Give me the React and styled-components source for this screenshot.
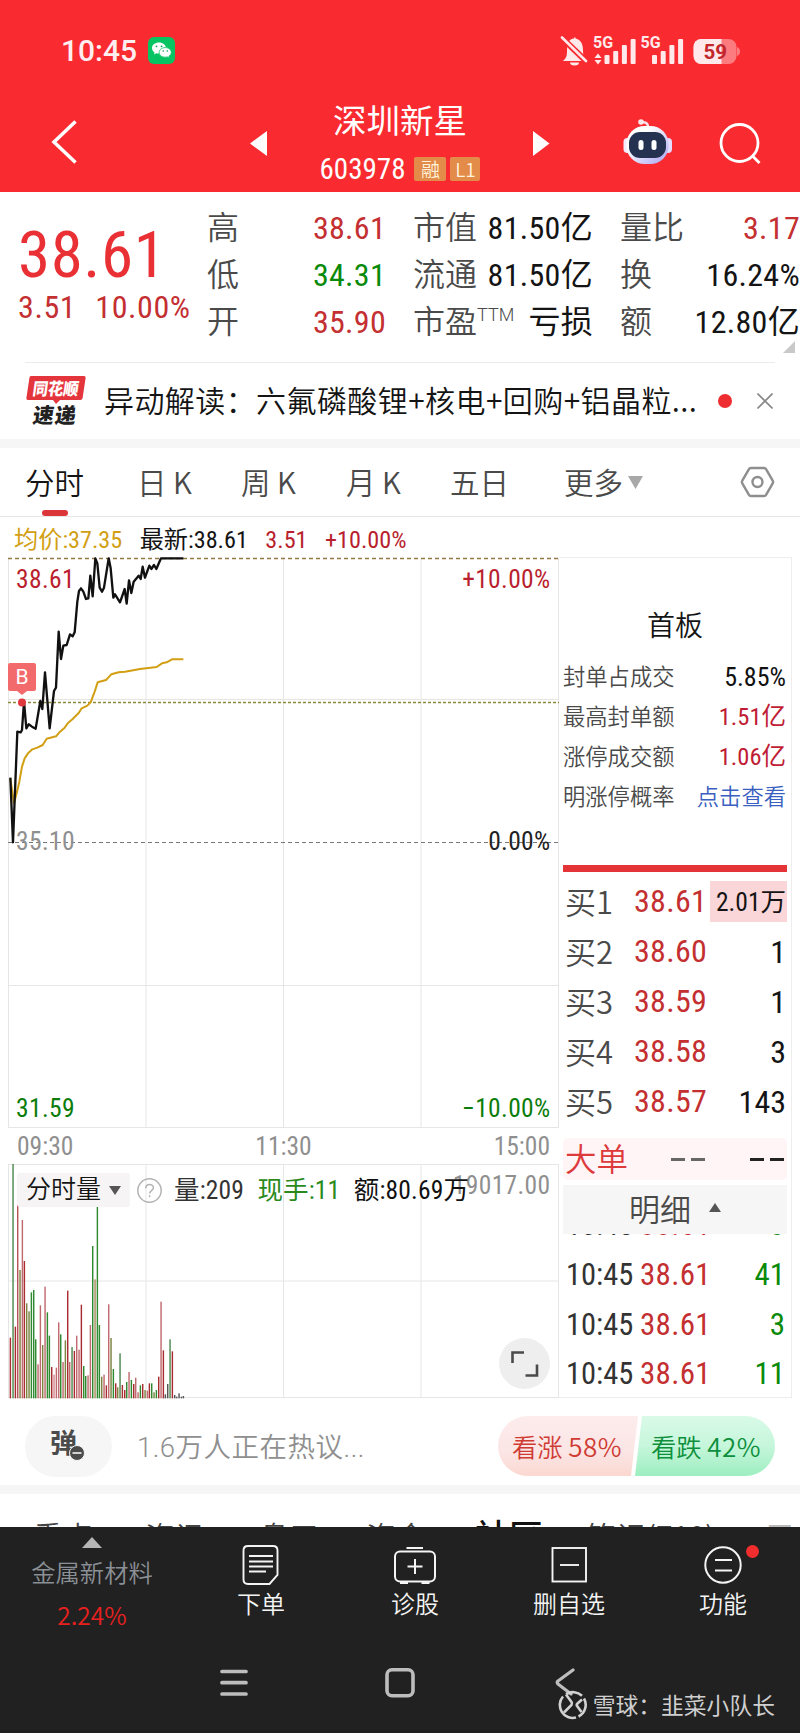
import React from 'react';
import styled, { createGlobalStyle } from 'styled-components';

const color = {
  brand: '#f92b31',
  up: '#c42f31',
  down: '#0a8a0a',
  text: '#141414',
  label: '#4a4a4a',
  muted: '#8f8f8f',
  line: '#e6e6e6',
  avg: '#d29f14',
};

const numFont = "'Roboto Condensed', 'Noto Sans CJK SC', sans-serif";
const textFont = "'Noto Sans CJK SC', sans-serif";

const quoteColumns = [
  [
    { label: '高', value: '38.61', tone: 'up' },
    { label: '低', value: '34.31', tone: 'down' },
    { label: '开', value: '35.90', tone: 'up' },
  ],
  [
    { label: '市值', value: '81.50亿' },
    { label: '流通', value: '81.50亿' },
    { label: '市盈', sup: 'TTM', value: '亏损' },
  ],
  [
    { label: '量比', value: '3.17', tone: 'up' },
    { label: '换', value: '16.24%' },
    { label: '额', value: '12.80亿' },
  ],
];

const periods = [
  { name: '分时', width: 61, gap: 51 },
  { name: '日 K', width: 54, gap: 50 },
  { name: '周 K', width: 54, gap: 51 },
  { name: '月 K', width: 54, gap: 50 },
  { name: '五日', width: 58, gap: 56 },
];

const boardFacts = [
  { label: '封单占成交', value: '5.85%', tone: 'text' },
  { label: '最高封单额', value: '1.51亿', tone: 'up' },
  { label: '涨停成交额', value: '1.06亿', tone: 'up' },
];

const bids = [
  { label: '买1', price: '38.61', qty: '2.01万', hot: true },
  { label: '买2', price: '38.60', qty: '1' },
  { label: '买3', price: '38.59', qty: '1' },
  { label: '买4', price: '38.58', qty: '3' },
  { label: '买5', price: '38.57', qty: '143' },
];

const trades = [
  { time: '10:45', price: '38.61', qty: '3' },
  { time: '10:45', price: '38.61', qty: '41' },
  { time: '10:45', price: '38.61', qty: '3' },
  { time: '10:45', price: '38.61', qty: '11' },
];

// chart units are a third of a pixel
const pricePoints =
  '31,1028 39,1222 52,890 62,892 66,885 72,800 79,880 86,868 96,875 107,881 121,798 127,822 135,712 149,880 162,768 168,758 176,590 183,672 190,632 200,630 210,598 218,604 224,592 232,500 237,468 243,460 250,470 258,492 265,490 271,422 278,484 286,370 292,385 299,458 306,470 312,458 326,370 332,400 340,488 345,478 360,502 374,462 380,506 387,436 394,474 401,440 416,422 422,432 428,395 435,428 448,392 454,402 462,390 469,402 483,370 550,370';
const avgPoints =
  '31,1030 42,1105 50,1075 58,1040 66,995 74,970 84,955 97,943 112,938 128,930 140,911 168,904 180,890 194,878 204,864 218,852 236,834 245,820 262,812 272,802 284,770 293,742 318,735 334,718 356,712 375,710 420,702 470,696 486,685 500,682 516,673 550,673';

const red = '#a82c30';
const pink = '#c06a70';
const green = '#2f8a2f';
const olive = '#7c8440';
const grey = '#555';

// [x, top, colour]
const volumes = [
  [31, 773, red], [39, 252, '#4c8a50'], [46, 740, red], [53, 297, '#b5555a'], [60, 570, olive],
  [67, 420, pink], [73, 543, red], [80, 670, olive], [87, 694, olive], [94, 637, green],
  [101, 630, green], [107, 778, green], [114, 853, pink], [121, 676, pink], [128, 795, olive],
  [135, 620, pink], [142, 697, green], [148, 767, green], [155, 861, red], [162, 884, '#d88a90'],
  [169, 863, pink], [176, 727, pink], [182, 763, green], [189, 846, pink], [196, 781, olive],
  [203, 632, red], [209, 846, pink], [216, 801, '#4c8a50'], [223, 813, red], [230, 767, pink],
  [237, 809, pink], [244, 674, red], [251, 858, green], [257, 888, green], [264, 886, pink],
  [271, 735, pink], [278, 498, green], [285, 598, '#a98a5c'], [292, 372, green], [298, 735, green],
  [305, 890, olive], [312, 884, pink], [319, 916, red], [326, 673, pink], [333, 774, olive],
  [340, 867, green], [347, 910, red], [353, 922, olive], [360, 820, '#4c8a50'], [367, 915, red],
  [374, 930, red], [380, 906, green], [387, 876, pink], [394, 900, green], [401, 912, red],
  [407, 893, pink], [414, 937, pink], [421, 916, green], [428, 912, red], [435, 930, olive],
  [442, 932, pink], [448, 910, red], [455, 910, green], [462, 937, olive], [469, 930, green],
  [476, 890, red], [483, 665, pink], [490, 811, red], [496, 943, grey], [503, 912, grey],
  [510, 778, '#4c8a50'], [517, 814, red], [524, 945, grey], [530, 950, grey], [537, 940, grey],
  [544, 950, grey], [550, 948, grey],
];

const GlobalStyle = createGlobalStyle`
  body {
    margin: 0;
    background: #fff;
  }
  * {
    box-sizing: border-box;
  }
`;

const Phone = styled.div`
  width: 800px;
  height: 1733px;
  display: flex;
  flex-direction: column;
  overflow: hidden;
  background: #fff;
  color: ${color.text};
  font-family: ${textFont};
  font-weight: 350;
  white-space: nowrap;
`;

/* header */

const Header = styled.header`
  height: 192px;
  background: ${color.brand};
  color: #fff;
`;

const StatusBar = styled.div`
  height: 101px;
  padding: 0 60px 0 61px;
  display: flex;
  align-items: center;
  svg {
    flex: none;
  }
`;

const Clock = styled.span`
  width: 87px;
  font: 500 30px/40px Roboto, sans-serif;
  color: #ffeef0;
`;

const StatusIcons = styled.svg`
  margin-left: auto;
`;

const TitleBar = styled.div`
  height: 91px;
  padding-left: 51px;
  display: flex;
  align-items: flex-start;
`;

const TitleIcon = styled.svg`
  flex: none;
  margin: ${(p) => p.$top}px 0 0 ${(p) => p.$left}px;
`;

const Title = styled.div`
  width: 220px;
  margin-left: 23px;
  display: flex;
  flex-direction: column;
  align-items: center;
`;

const StockName = styled.h1`
  margin: -1px 0 0;
  font-size: 33.5px;
  line-height: 38px;
  font-weight: 400;
`;

const CodeRow = styled.div`
  margin-top: 16px;
  display: flex;
  align-items: center;
  font: 400 29px/30px ${numFont};
`;

const Tag = styled.span`
  width: ${(p) => p.$width}px;
  height: 24px;
  margin-left: ${(p) => p.$gap}px;
  border-radius: 2px;
  background: #e38b48;
  color: #fff3dd;
  font: 350 19px/23px ${textFont};
  text-align: center;
`;

/* quote */

const Quote = styled.section`
  position: relative;
  height: 170px;
  padding-top: 13px;
  display: flex;
  font-family: ${numFont};
`;

const PriceBlock = styled.div`
  width: 207px;
  padding: 22px 0 0 18px;
`;

const Price = styled.div`
  font-size: 65px;
  font-weight: 400;
  letter-spacing: 0.6px;
  line-height: 56px;
  color: #e93035;
`;

const Change = styled.div`
  margin-top: 7px;
  display: flex;
  gap: 19px;
  font-size: 32px;
  font-weight: 400;
  letter-spacing: 0.6px;
  line-height: 34px;
  color: ${color.up};
`;

const QuoteColumn = styled.div`
  width: ${(p) => p.$width}px;
  margin-right: ${(p) => p.$gap}px;
`;

const QuoteCell = styled.div`
  height: 47px;
  display: flex;
  justify-content: space-between;
  font-size: 32px;
  line-height: 47px;
`;

const QuoteLabel = styled.span`
  display: flex;
  color: ${color.label};
`;

const Sup = styled.small`
  font: 300 18px/32px Roboto, sans-serif;
`;

const QuoteValue = styled.span`
  font-weight: 400;
  letter-spacing: 0.3px;
  color: ${(p) => color[p.$tone || 'text']};
`;

const Corner = styled.i`
  position: absolute;
  right: 5px;
  bottom: 9px;
  border: 6px solid;
  border-color: transparent #c9c9c9 #c9c9c9 transparent;
`;

const News = styled.section`
  height: 77px;
  margin: 0 25px;
  border-top: 1px solid #ececec;
  display: flex;
  align-items: center;
`;

const NewsLogo = styled.svg`
  flex: none;
  width: 64px;
  height: 56px;
  text {
    font-family: ${textFont};
    font-weight: 900;
  }
`;

const NewsText = styled.p`
  width: 614px;
  margin: -5px 0 0 15px;
  font: 350 30px/40px ${textFont};
  letter-spacing: 0.42px;
`;

const RedDot = styled.i`
  width: 14px;
  height: 14px;
  border-radius: 50%;
  background: #ee2d30;
`;

const CloseIcon = styled.svg`
  margin: 0 2px 0 auto;
`;

const Band = styled.div`
  height: 9px;
  background: #f6f6f6;
`;

/* period tabs */

const Tabs = styled.nav`
  height: 69px;
  padding-left: 25px;
  border-bottom: 1px solid ${color.line};
  display: flex;
`;

const Tab = styled.div`
  position: relative;
  width: ${(p) => p.$width}px;
  margin-right: ${(p) => p.$gap}px;
  font-size: 29.5px;
  line-height: 67px;
  color: ${(p) => (p.$active ? color.text : color.label)};
  ${(p) =>
    p.$active &&
    `&::after {
      content: '';
      position: absolute;
      left: 17px;
      bottom: 0;
      width: 26px;
      height: 6px;
      border-radius: 3px;
      background: #dc3539;
    }`}
`;

const TabArrow = styled.svg`
  margin: 28px 97px 0 4px;
`;

const SettingsIcon = styled.svg`
  margin-top: 18px;
`;

/* chart area */

const Main = styled.main`
  height: 881px;
  padding-left: 8px;
  display: flex;
`;

const ChartColumn = styled.div`
  width: 551px;
`;

const Legend = styled.div`
  height: 41px;
  padding-left: 6px;
  display: flex;
  gap: 17.500px;
  font: 400 24.2px/46px ${numFont};
`;

const LegendItem = styled.span`
  color: ${(p) => p.$color};
`;

const PriceChart = styled.div`
  position: relative;
  height: 570px;
`;

const Plot = styled.svg`
  position: absolute;
  inset: 0;
  overflow: visible;
`;

const ChartLabel = styled.span`
  position: absolute;
  ${(p) => p.$side}: ${(p) => (p.$side === 'left' ? 8 : 8.5)}px;
  top: ${(p) => p.$top}px;
  font: 400 25.500px/28px ${numFont};
  letter-spacing: 0.35px;
  color: ${(p) => p.$color};
`;

const BuyMark = styled.span`
  position: absolute;
  left: 0;
  top: 105px;
  width: 28px;
  height: 28px;
  border-radius: 2px;
  background: #f26a6c;
  color: #fff;
  font: 400 21px/29px Roboto, sans-serif;
  text-align: center;
  &::after {
    content: '';
    position: absolute;
    left: 9px;
    top: 28px;
    border: 5px solid transparent;
    border-top: 4px solid #f26a6c;
  }
`;

const TimeAxis = styled.div`
  height: 36px;
  padding: 0 9px;
  display: flex;
  justify-content: space-between;
  font: 400 25.500px/37px ${numFont};
  color: ${color.muted};
`;

const VolumeChart = styled.div`
  position: relative;
  height: 234px;
`;

const VolumeHead = styled.div`
  position: absolute;
  left: 9px;
  top: 9px;
  display: flex;
  align-items: center;
  font: 400 25.500px/34px ${numFont};
`;

const VolumePicker = styled.div`
  width: 113px;
  height: 34px;
  padding-left: 9px;
  border-radius: 3px;
  background: #f6f4f5;
  font-weight: 350;
  font-size: 25px;
  display: flex;
  align-items: center;
  gap: 8px;
`;

const HelpIcon = styled.svg`
  margin: 0 12px 0 7px;
`;

const VolumeValue = styled.span`
  margin-right: 13.500px;
  letter-spacing: 0.15px;
  color: ${(p) => p.$color};
`;

const ExpandButton = styled.span`
  position: absolute;
  right: 9px;
  bottom: 9px;
  width: 51px;
  height: 51px;
  border-radius: 50%;
  background: #eee;
`;

/* order book */

const SidePanel = styled.aside`
  width: 233px;
  height: 841px;
  margin-top: 40px;
  padding: 0 4px;
  border: 1px solid #ededed;
  border-left: none;
  overflow: hidden;
`;

const BoardTitle = styled.h2`
  margin: 46px 0 0;
  font-size: 28px;
  line-height: 40px;
  font-weight: 350;
  text-align: center;
`;

const Facts = styled.div`
  height: 181px;
  margin-top: 13px;
`;

const Fact = styled.div`
  height: 40px;
  padding: 0 1px 0 0;
  display: flex;
  justify-content: space-between;
  font: 350 22.3px/40px ${numFont};
  color: ${color.label};
`;

const FactValue = styled.span`
  font-size: ${(p) => (p.$tone === 'text' ? 26 : p.$tone === 'up' ? 24.5 : 22.3)}px;
  font-weight: ${(p) => (p.$tone === 'link' ? 350 : 400)};
  color: ${(p) => ({ up: '#c01c34', text: '#111', link: '#3a5fc0' })[p.$tone]};
`;

const BidBar = styled.div`
  height: 7px;
  margin: 27px 0 4px;
  background: #e53438;
`;

const BookRow = styled.div`
  height: 50px;
  padding-left: 2px;
  display: flex;
  align-items: center;
  font: 400 32px/50px ${numFont};
`;

const BookLabel = styled.span`
  width: 69px;
  font: 350 31px/50px ${textFont};
  line-height: 46px;
  color: ${color.label};
`;

const BookPrice = styled.span`
  width: 76px;
  letter-spacing: 0.3px;
  color: ${color.up};
`;

const BookQty = styled.span`
  flex: 1;
  height: 41px;
  padding-right: 1px;
  line-height: 42px;
  text-align: right;
  font-size: ${(p) => (p.$hot ? 25.5 : 32)}px;
  background: ${(p) => (p.$hot ? '#fad6d8' : 'none')};
`;

const BigOrder = styled.div`
  height: 42px;
  margin-top: 12px;
  padding: 0 2px;
  border-radius: 5px;
  background: #fff4f6;
  display: flex;
  align-items: center;
  font: 350 31.500px/38px ${textFont};
  color: #dd3a3c;
`;

const BigOrderLabel = styled.span`
  height: 42px;
`;

const Dashes = styled.span`
  display: flex;
  gap: 6px;
  margin-left: ${(p) => p.$gap}px;
  &::before,
  &::after {
    content: '';
    width: 14px;
    height: 3px;
    background: ${(p) => p.$color};
  }
`;

const DetailHead = styled.div`
  height: 49px;
  margin-top: 5px;
  padding-bottom: 4px;
  background: #f6f6f6;
  display: flex;
  align-items: center;
  justify-content: center;
  gap: 18px;
  font-size: 31px;
  line-height: 45px;
  color: ${color.label};
`;

const TradeList = styled.div`
  height: 163px;
  overflow: hidden;
  display: flex;
  flex-direction: column;
  justify-content: flex-end;
`;

const Trade = styled.div`
  flex: none;
  height: 49.6px;
  padding: 4px 2px 0 3px;
  display: flex;
  align-items: center;
  font: 400 31px/44px ${numFont};
`;

const TradeTime = styled.span`
  width: 74px;
  font-size: 30.5px;
  color: #333;
`;

const TradeQty = styled.span`
  margin-left: auto;
  color: ${color.down};
`;

/* discussion */

const Talk = styled.section`
  height: 87px;
  padding: 0 25px;
  display: flex;
  align-items: center;
`;

const DanmuButton = styled.div`
  position: relative;
  top: 5px;
  width: 87px;
  height: 61px;
  border-radius: 31px;
  background: #f6f6f6;
  padding-left: 25px;
  font: 700 27px/52px ${textFont};
  color: #4b4b4b;
  svg {
    position: absolute;
    left: 44px;
    top: 29px;
  }
`;

const TalkHint = styled.p`
  margin: 12px 0 0 25px;
  font: 350 27.500px/40px Roboto, ${textFont};
  letter-spacing: 0.5px;
  color: ${color.muted};
`;

const Vote = styled.div`
  height: 60px;
  margin: 9px 0 0 auto;
  border-radius: 30px;
  overflow: hidden;
  display: flex;
`;

const VoteSide = styled.div`
  width: 140px;
  padding-left: ${(p) => (p.$up ? 14 : 16)}px;
  margin-left: ${(p) => (p.$up ? 0 : -3)}px;
  clip-path: ${(p) =>
    p.$up ? 'polygon(0 0, 100% 0, 133px 100%, 0 100%)' : 'polygon(7px 0, 100% 0, 100% 100%, 0 100%)'};
  background: ${(p) =>
    p.$up ? 'linear-gradient(#fdecec, #fbe5e5 60%, #fbd8d0)' : 'linear-gradient(#d9fae8, #c6f6db 50%, #9deec0)'};
  font: 350 25.3px/59px ${textFont};
  color: ${(p) => (p.$up ? '#cf3b33' : '#0d8f3c')};
`;

const VoteShare = styled.span`
  font-size: 26px;
  letter-spacing: 0.5px;
`;

const Feed = styled.div`
  height: 33px;
  overflow: hidden;
  padding: 21px 0 0 33px;
  display: flex;
`;

const FeedTab = styled.span`
  flex: none;
  width: ${(p) => p.$width}px;
  font-size: ${(p) => (p.$active ? 34 : 30)}px;
  font-weight: ${(p) => (p.$active ? 500 : 350)};
  line-height: 40px;
  color: ${(p) => (p.$faded ? '#bbb' : p.$active ? '#111' : '#444')};
`;

/* bottom bars */

const Dock = styled.footer`
  height: 206px;
  background: #212121;
  color: #f4f4f4;
`;

const Actions = styled.div`
  height: 118px;
  display: grid;
  grid-template-columns: 184px repeat(4, 154px);
`;

const Sector = styled.div`
  display: flex;
  flex-direction: column;
  align-items: center;
  font-size: 24.3px;
  line-height: 30px;
  color: #8b9096;
`;

const SectorChange = styled.span`
  margin-top: 13px;
  font-size: 24.500px;
  color: #e8201f;
`;

const SectorArrow = styled.svg`
  margin: 10px 0 9px;
`;

const Action = styled.div`
  position: relative;
  display: flex;
  flex-direction: column;
  align-items: center;
  font-size: 24px;
  line-height: 30px;
  svg {
    margin: 17px 0 2px;
  }
`;

const Badge = styled.i`
  position: absolute;
  left: 100px;
  top: 18px;
  width: 13px;
  height: 13px;
  border-radius: 50%;
  background: #f22d2d;
`;

const SystemNav = styled.div`
  position: relative;
  height: 88px;
`;

const NavKeys = styled.div`
  padding: 22px 0 0 219px;
  display: flex;
  gap: 135px;
`;

const Watermark = styled.div`
  position: absolute;
  right: 25px;
  top: 42px;
  display: flex;
  align-items: center;
  gap: 5px;
  font: 400 22.800px/36px ${textFont};
  color: #cfcfcf;
`;

const WechatIcon = () => (
  <svg width="27" height="27" viewBox="0 0 27 27">
    <rect width="27" height="27" rx="6" fill="#07c463" />
    <path d="M11 5.500c-4 0-7 2.400-7 5.600 0 1.800 1 3.300 2.500 4.300l-.5 2 2.300-1.200c.8.3 1.700.4 2.700.4 4 0 7-2.400 7-5.500s-3-5.600-7-5.600z" fill="#fff" />
    <path d="M17.200 10.600c-3.400 0-6 2.100-6 4.800s2.600 4.800 6 4.800c.8 0 1.500-.1 2.200-.3l2 1-.5-1.700c1.500-.9 2.400-2.300 2.400-3.800 0-2.700-2.700-4.800-6.100-4.800z" fill="#fff" stroke="#07c463" strokeWidth=".8" />
    <g fill="#07a050">
      <circle cx="8.500" cy="9.300" r=".9" />
      <circle cx="13.500" cy="9.300" r=".9" />
      <circle cx="15.200" cy="14" r=".8" />
      <circle cx="19.300" cy="14" r=".8" />
    </g>
  </svg>
);

const Bars = ({ x }) => (
  <g>
    <rect x={x} y="19" width="5" height="9" rx="1" />
    <rect x={x + 8.7} y="15" width="5" height="13" rx="1" />
    <rect x={x + 17.4} y="9" width="5" height="19" rx="1" />
    <rect x={x + 26.1} y="3" width="5" height="25" rx="1" />
  </g>
);

const SignalIcons = () => (
  <StatusIcons width="180" height="30" viewBox="0 0 180 30" fill="#ffe9eb">
    <path d="M3 25c3-3 4-5 4-9C7 7 9 3 14 2.500V1.500h1.500v1C20 3.500 23 7 23 14c0 6 1 8 4 11z" />
    <path d="M10 26.500h9a4.500 3 0 0 1-9 0z" />
    <path d="M1 1l26 25" stroke={color.brand} strokeWidth="6" />
    <path d="M2 1.500l24 23.500" stroke="#ffe9eb" strokeWidth="2.600" strokeLinecap="round" />
    <text x="33" y="12" fontFamily="Roboto, sans-serif" fontWeight="700" fontSize="16">5G</text>
    <path d="M38 17.500l3.500 4.500h-7zM38 28.500l3.500-4.500h-7z" />
    <Bars x={44.5} />
    <text x="80.500" y="12" fontFamily="Roboto, sans-serif" fontWeight="700" fontSize="16">5G</text>
    <Bars x={92} />
    <rect x="133.500" y="3" width="43" height="25" rx="8" opacity=".42" />
    <path d="M141 3h20.500v25H141a7.500 8 0 0 1-7.500-8v-9a7.500 8 0 0 1 7.500-8z" />
    <path d="M177 11q3 1 3 4.500t-3 4.500z" opacity=".42" />
    <text x="143.500" y="22.500" fontFamily="Roboto, sans-serif" fontWeight="700" fontSize="20.500" fill="#c2272c">59</text>
  </StatusIcons>
);

const RobotIcon = () => (
  <TitleIcon width="50" height="48" viewBox="0 0 50 48" $left={73} $top={17}>
    <defs>
      <linearGradient id="shell" x1="0" y1="0" x2="1" y2="1">
        <stop offset=".3" stopColor="#fff" />
        <stop offset="1" stopColor="#a6a2f2" />
      </linearGradient>
    </defs>
    <path d="M25 9q0-5-6-5" fill="none" stroke="#f6dfe6" strokeWidth="2.500" />
    <circle cx="18" cy="4" r="2.800" fill="#fbe6ea" />
    <rect x=".5" y="20" width="8" height="15" rx="4" fill="#f3eaff" />
    <rect x="41" y="20" width="8" height="15" rx="4" fill="#e3dcff" />
    <rect x="3.500" y="8" width="42" height="38" rx="18" fill="url(#shell)" />
    <rect x="6" y="14" width="37" height="26" rx="11" fill="#253150" />
    <rect x="15.500" y="22" width="5" height="10" rx="2.500" fill="#fff" />
    <rect x="28.500" y="22" width="5" height="10" rx="2.500" fill="#fff" />
  </TitleIcon>
);

const HeaderBlock = () => (
  <Header>
    <StatusBar>
      <Clock>10:45</Clock>
      <WechatIcon />
      <SignalIcons />
    </StatusBar>
    <TitleBar>
      <TitleIcon width="27" height="44" viewBox="0 0 27 44" $left={0} $top={19} fill="none" stroke="#fff" strokeWidth="3.500">
        <path d="M24.500 1.500L3 22l21.500 20.500" />
      </TitleIcon>
      <TitleIcon width="17" height="25" viewBox="0 0 17 25" $left={172} $top={30} fill="#fff">
        <path d="M17 0v25L0 12.500z" />
      </TitleIcon>
      <Title>
        <StockName>深圳新星</StockName>
        <CodeRow>
          603978
          <Tag $width={32} $gap={9}>融</Tag>
          <Tag $width={30} $gap={4}>L1</Tag>
        </CodeRow>
      </Title>
      <TitleIcon width="17" height="25" viewBox="0 0 17 25" $left={23} $top={30} fill="#fff">
        <path d="M0 0v25l16.500-12.500z" />
      </TitleIcon>
      <RobotIcon />
      <TitleIcon width="42" height="43" viewBox="0 0 42 43" $left={46} $top={21} fill="none" stroke="#fff" strokeWidth="2.800">
        <circle cx="20.500" cy="21" r="18.500" />
        <path d="M33 33.500l7.500 7.500" />
      </TitleIcon>
    </TitleBar>
  </Header>
);

const QuoteBlock = () => (
  <Quote>
    <PriceBlock>
      <Price>38.61</Price>
      <Change>
        <span>3.51</span>
        <span>10.00%</span>
      </Change>
    </PriceBlock>
    {quoteColumns.map((cells, i) => (
      <QuoteColumn key={i} $width={i === 0 ? 179 : 180} $gap={i === 2 ? 0 : 27}>
        {cells.map((cell) => (
          <QuoteCell key={cell.label}>
            <QuoteLabel>
              {cell.label}
              {cell.sup && <Sup>{cell.sup}</Sup>}
            </QuoteLabel>
            <QuoteValue $tone={cell.tone}>{cell.value}</QuoteValue>
          </QuoteCell>
        ))}
      </QuoteColumn>
    ))}
    <Corner />
  </Quote>
);

const NewsBlock = () => (
  <News>
    <NewsLogo viewBox="0 0 64 56">
      <path d="M6 3h53q2 0 1.600 2l-3 20q-.3 2-2.300 2H35l-4 4-3-4H3q-2 0-1.600-2l3-20Q4.600 3 6 3z" fill="#e5353c" />
      <text x="10" y="22" fontSize="17" fill="#fff" transform="skewX(-8)" textLength="46" lengthAdjust="spacingAndGlyphs">同花顺</text>
      <text x="14" y="50" fontSize="21" fill="#222" transform="skewX(-8)" textLength="43">速递</text>
    </NewsLogo>
    <NewsText>异动解读：六氟磷酸锂+核电+回购+铝晶粒...</NewsText>
    <RedDot />
    <CloseIcon width="16" height="16" viewBox="0 0 16 16" stroke="#888" strokeWidth="1.600">
      <path d="M.5.5l15 15M15.500.5l-15 15" />
    </CloseIcon>
  </News>
);

const PriceSection = () => (
  <PriceChart>
    <Plot width="551" height="570" fill="none">
      <path d="M.5 0V569.500M138 0V569.500M275.500 0V569.500M413 0V569.500M550.500 0V569.500M0 141.500H551M0 427.500H551M0 569.500H551" stroke={color.line} />
      <path d="M0 .5H551" stroke="#937a45" strokeWidth="1.300" strokeDasharray="4 3" />
      <path d="M0 144.500H551" stroke="#8a8a3c" strokeWidth="1.300" strokeDasharray="3 2" />
      <path d="M0 284.500H551" stroke="#777" strokeWidth="1.200" strokeDasharray="4 3" />
      <g transform="translate(-8 -123) scale(.33333)" strokeLinejoin="round">
        <polyline points={avgPoints} stroke={color.avg} strokeWidth="6" />
        <polyline points={pricePoints} stroke="#111" strokeWidth="7" />
      </g>
      <circle cx="14" cy="144.500" r="4" fill="#e0383f" />
    </Plot>
    <ChartLabel $side="left" $top={7} $color="#b91f2e">38.61</ChartLabel>
    <ChartLabel $side="right" $top={7} $color="#b91f2e">+10.00%</ChartLabel>
    <ChartLabel $side="left" $top={269} $color={color.muted}>35.10</ChartLabel>
    <ChartLabel $side="right" $top={269} $color="#222">0.00%</ChartLabel>
    <ChartLabel $side="left" $top={536} $color="#0b7d0b">31.59</ChartLabel>
    <ChartLabel $side="right" $top={536} $color="#0b7d0b">−10.00%</ChartLabel>
    <BuyMark>B</BuyMark>
  </PriceChart>
);

const VolumeSection = () => (
  <VolumeChart>
    <Plot width="551" height="234" fill="none">
      <path d="M.5 0V234M138 0V234M275.500 0V234M413 0V234M550.500 0V234M0 .5H551M0 117H551M0 233.500H551" stroke={color.line} />
      <g transform="translate(-8 -84) scale(.33333)">
        {volumes.map(([x, top, fill]) => (
          <rect key={x} x={x - 2} y={top} width="4.300" height={955 - top} fill={fill} />
        ))}
      </g>
    </Plot>
    <ChartLabel $side="right" $top={7} $color={color.muted}>19017.00</ChartLabel>
    <VolumeHead>
      <VolumePicker>
        分时量
        <svg width="12" height="9" viewBox="0 0 12 9" fill="#555">
          <path d="M0 0h12L6 9z" />
        </svg>
      </VolumePicker>
      <HelpIcon width="25" height="25" viewBox="0 0 25 25" fill="none" stroke="#b3b3b3" strokeWidth="1.500">
        <circle cx="12.500" cy="12.500" r="11.700" />
        <path d="M8.800 10.200c0-5 7.600-4.900 7.600-.4 0 2.600-3.800 3-3.800 5.700M12.600 17.300v2" />
      </HelpIcon>
      <VolumeValue $color="#333">量:209</VolumeValue>
      <VolumeValue $color="#2a8a1c">现手:11</VolumeValue>
      <VolumeValue $color="#111">额:80.69万</VolumeValue>
    </VolumeHead>
    <ExpandButton>
      <svg width="51" height="51" viewBox="0 0 51 51" fill="none" stroke="#4a4a4a" strokeWidth="2.600">
        <path d="M13.500 25V14.500H25M38 26.500V37.500H26.500" />
      </svg>
    </ExpandButton>
  </VolumeChart>
);

const OrderBook = () => (
  <SidePanel>
    <BoardTitle>首板</BoardTitle>
    <Facts>
      {boardFacts.map((fact) => (
        <Fact key={fact.label}>
          {fact.label}
          <FactValue $tone={fact.tone}>{fact.value}</FactValue>
        </Fact>
      ))}
      <Fact>
        明涨停概率
        <FactValue $tone="link">点击查看</FactValue>
      </Fact>
    </Facts>
    <BidBar />
    {bids.map((bid) => (
      <BookRow key={bid.label}>
        <BookLabel>{bid.label}</BookLabel>
        <BookPrice>{bid.price}</BookPrice>
        <BookQty $hot={bid.hot}>{bid.qty}</BookQty>
      </BookRow>
    ))}
    <BigOrder>
      <BigOrderLabel>大单</BigOrderLabel>
      <Dashes $gap={43} $color="#666" />
      <Dashes $gap={45} $color="#222" />
    </BigOrder>
    <DetailHead>
      明细
      <svg width="12" height="9" viewBox="0 0 12 9" fill="#555">
        <path d="M0 9h12L6 0z" />
      </svg>
    </DetailHead>
    <TradeList>
      {trades.map((trade, i) => (
        <Trade key={i}>
          <TradeTime>{trade.time}</TradeTime>
          <BookPrice>{trade.price}</BookPrice>
          <TradeQty>{trade.qty}</TradeQty>
        </Trade>
      ))}
    </TradeList>
  </SidePanel>
);

const BottomDock = () => (
  <Dock>
    <Actions>
      <Sector>
        <SectorArrow width="20" height="11" viewBox="0 0 20 11" fill="#b5b5b5">
          <path d="M10 0l10 11H0z" />
        </SectorArrow>
        金属新材料
        <SectorChange>2.24%</SectorChange>
      </Sector>
      <Action>
        <svg width="38" height="42" viewBox="0 0 38 42" fill="none" stroke="#f4f4f4" strokeWidth="1.900">
          <path d="M6 2h25q4.500 0 4.500 4.500V31l-8 9H6q-4.500 0-4.500-4.500v-29Q1.500 2 6 2z" />
          <path d="M7 12h24M7 17.500h24M7 22.500h24M7 27.500h17" />
        </svg>
        下单
      </Action>
      <Action>
        <svg width="44" height="42" viewBox="0 0 44 42" fill="none" stroke="#f4f4f4" strokeWidth="2">
          <rect x="2" y="7.500" width="40" height="30" rx="5" />
          <path d="M13.500 4h16.500M22 15v15M14.500 22.500h15M7 39h8M28.500 39h8" />
        </svg>
        诊股
      </Action>
      <Action>
        <svg width="38" height="42" viewBox="0 0 38 42" fill="none" stroke="#f4f4f4" strokeWidth="1.900">
          <rect x="2.500" y="4" width="33.500" height="33.500" />
          <path d="M10 21h19" />
        </svg>
        删自选
      </Action>
      <Action>
        <svg width="40" height="42" viewBox="0 0 40 42" fill="none" stroke="#f4f4f4" strokeWidth="2">
          <circle cx="20" cy="21" r="17.700" />
          <path d="M12 16h17M12 26.500h17" />
        </svg>
        功能
        <Badge />
      </Action>
    </Actions>
    <SystemNav>
      <NavKeys>
        <svg width="30" height="34" viewBox="0 0 30 34" stroke="#bdbdbd" strokeWidth="3.700" strokeLinecap="round">
          <path d="M3 4.500h24M3 15.700h24M3 27h24" />
        </svg>
        <svg width="32" height="34" viewBox="0 0 32 34" fill="none" stroke="#bdbdbd" strokeWidth="3.600">
          <rect x="3" y="2.800" width="26" height="26" rx="5" />
        </svg>
        <svg width="24" height="34" viewBox="-2 0 24 34" fill="none" stroke="#bdbdbd" strokeWidth="3.200" strokeLinecap="round" strokeLinejoin="round">
          <path d="M20 3L5 14q-1.500 1.500 0 3L18 27" />
        </svg>
      </NavKeys>
      <Watermark>
        <svg width="30" height="30" viewBox="0 0 30 30" fill="none" stroke="#d2d2d2" strokeWidth="2.600">
          <path d="M18 27.600A13 13 0 0 1 5 6.500M8 4.200A13 13 0 0 1 24 5.800M26 8.500A13 13 0 0 1 20.500 26.500" />
          <path d="M8 4.500l5.500 7.500q1 1.500 0 3L6 22.500M24 9.500l-4.500 4q-1.500 1.500 0 3l4 5.500" />
        </svg>
        雪球：韭菜小队长
      </Watermark>
    </SystemNav>
  </Dock>
);

const App = () => (
  <Phone>
    <GlobalStyle />
    <HeaderBlock />
    <QuoteBlock />
    <NewsBlock />
    <Band />
    <Tabs>
      {periods.map((period, i) => (
        <Tab key={period.name} $width={period.width} $gap={period.gap} $active={i === 0}>
          {period.name}
        </Tab>
      ))}
      <Tab $width={60} $gap={0}>更多</Tab>
      <TabArrow width="15" height="13" viewBox="0 0 15 13" fill="#a8a8a8">
        <path d="M0 0h15L7.500 13z" />
      </TabArrow>
      <SettingsIcon width="35" height="32" viewBox="0 0 35 32" fill="none" stroke="#8e8e8e" strokeWidth="2.400">
        <path d="M11 2h13q1.500 0 2.200 1.300l6.500 11.400q.8 1.300 0 2.600l-6.500 11.400Q25.500 30 24 30H11q-1.500 0-2.200-1.300L2.300 17.300q-.8-1.300 0-2.600L8.800 3.300Q9.500 2 11 2z" />
        <circle cx="17.500" cy="16" r="5" />
      </SettingsIcon>
    </Tabs>
    <Main>
      <ChartColumn>
        <Legend>
          <LegendItem $color={color.avg}>均价:37.35</LegendItem>
          <LegendItem $color="#141414">最新:38.61</LegendItem>
          <LegendItem $color="#b91f2e">3.51</LegendItem>
          <LegendItem $color="#b91f2e">+10.00%</LegendItem>
        </Legend>
        <PriceSection />
        <TimeAxis>
          <span>09:30</span>
          <span>11:30</span>
          <span>15:00</span>
        </TimeAxis>
        <VolumeSection />
      </ChartColumn>
      <OrderBook />
    </Main>
    <Talk>
      <DanmuButton>
        弹
        <svg width="16" height="16" viewBox="0 0 16 16">
          <circle cx="8" cy="8" r="7.500" fill="#4b4b4b" stroke="#f6f6f6" />
          <path d="M3.500 8h9" stroke="#f6f6f6" strokeWidth="1.600" />
        </svg>
      </DanmuButton>
      <TalkHint>1.6万人正在热议...</TalkHint>
      <Vote>
        <VoteSide $up>看涨 <VoteShare>58%</VoteShare></VoteSide>
        <VoteSide>看跌 <VoteShare>42%</VoteShare></VoteSide>
      </Vote>
    </Talk>
    <Band />
    <Feed>
      <FeedTab $width={112}>重点</FeedTab>
      <FeedTab $width={114}>资讯</FeedTab>
      <FeedTab $width={107}>盘口</FeedTab>
      <FeedTab $width={109}>资金</FeedTab>
      <FeedTab $width={111} $active>社区</FeedTab>
      <FeedTab $width={180}>笔记(710)</FeedTab>
      <FeedTab $width={33} $faded>已</FeedTab>
    </Feed>
    <BottomDock />
  </Phone>
);

export default App;
